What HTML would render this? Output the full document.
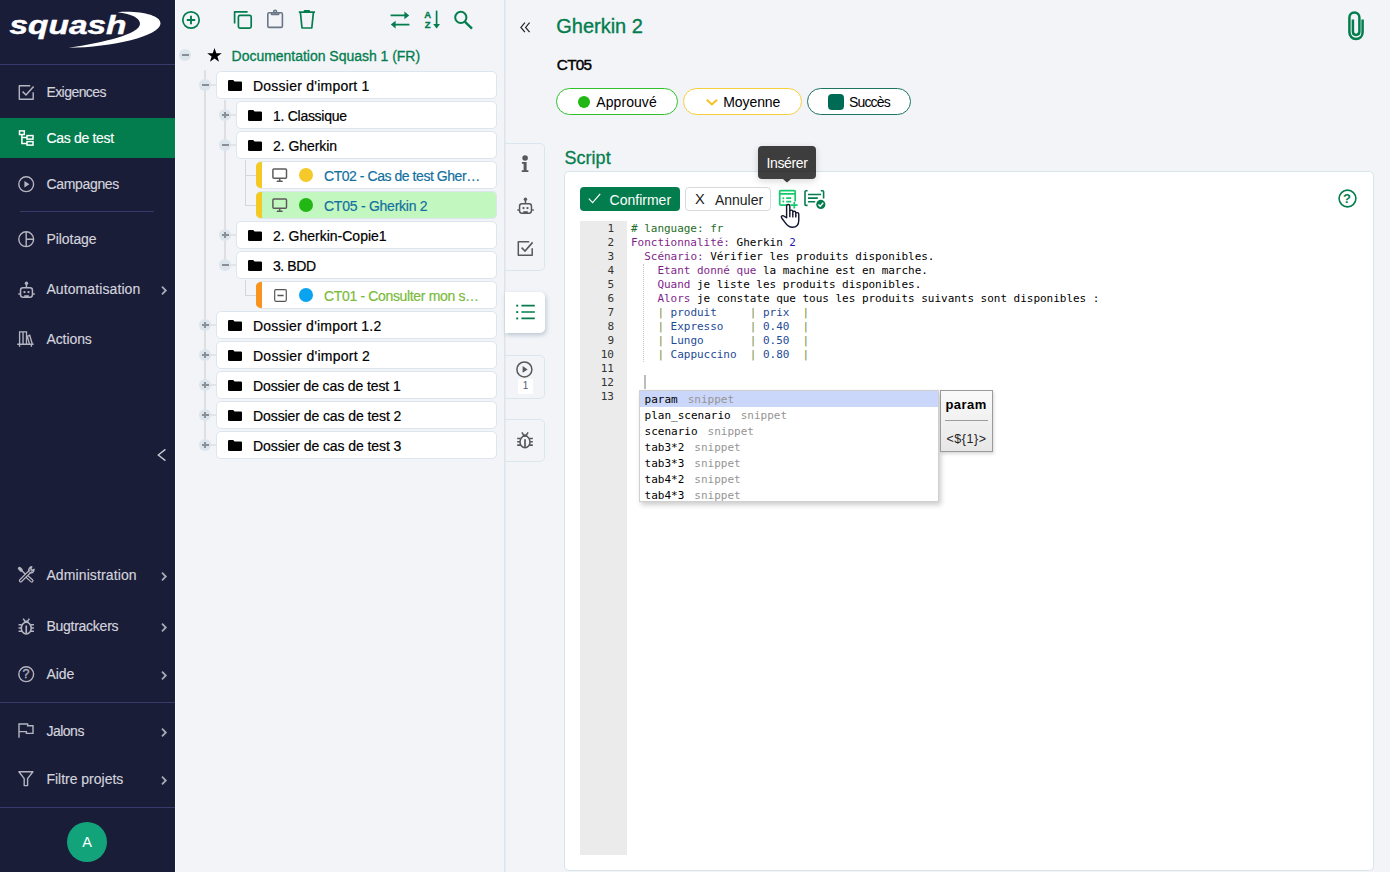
<!DOCTYPE html>
<html lang="fr">
<head>
<meta charset="utf-8">
<title>Squash - Gherkin 2</title>
<style>
*{box-sizing:border-box;margin:0;padding:0}
html,body{width:1390px;height:872px;overflow:hidden}
body{position:relative;background:#f2f4f8;font-family:"Liberation Sans",sans-serif;font-size:14px;color:#000}
.abs{position:absolute}
svg{display:block;overflow:visible}
/* ---------- sidebar ---------- */
#side{position:absolute;left:0;top:0;width:175px;height:872px;background:#1a1d38;color:#d9dae3}
#side .hr{position:absolute;height:1px;background:#373a6b}
#side .sl{position:absolute;left:46px;font-size:14px;line-height:20px;white-space:nowrap;-webkit-text-stroke:0.15px currentColor}
/* ---------- tree ---------- */
#tree{position:absolute;left:175px;top:0;width:329px;height:872px;background:#f2f4f8}
.node{position:absolute;height:28px;background:#fff;border:1px solid #dbe6ee;border-radius:5px;line-height:26px;font-size:14px;white-space:nowrap;overflow:hidden}
.node .lbl{position:absolute;top:1px;-webkit-text-stroke:0.2px currentColor}
.tg{position:absolute;width:12px;height:12px;border-radius:6px;background:#dce5ec}
.tg:before{content:"";position:absolute;left:2.5px;top:5px;width:7px;height:2px;background:#898e94}
.tg.plus:after{content:"";position:absolute;left:5px;top:3px;width:2px;height:6px;background:#8b9096}
.vl{position:absolute;width:2px;background:#dfdfe1}
.hl{position:absolute;height:2px;background:#e3e4e6}
.vl1{position:absolute;width:1px;background:#d6d6d6}
.hl1{position:absolute;height:1px;background:#d6d6d6}
/* ---------- main ---------- */
#main{position:absolute;left:504px;top:0;width:886px;height:872px}
.pill{position:absolute;top:88px;height:27px;border-radius:14px;background:#fff;border:1px solid #000;font-size:14.5px;line-height:25px;white-space:nowrap}
.mono{font-family:"DejaVu Sans Mono","Liberation Mono",monospace}
</style>
</head>
<body>
<div id="side">
<svg class="abs" style="left:0;top:0" width="175" height="64" viewBox="0 0 175 64">
<path d="M117.5 12.2 C140 10.5 160.5 15 160.5 23.5 C160.5 36 112 47.4 68.5 47.8 C104 42.6 139.5 34 140 24 C140.3 18 132 14 117.5 12.2Z" fill="#fff"/>
<text x="9.5" y="33.6" font-family="'Liberation Sans',sans-serif" font-weight="700" font-style="italic" font-size="25.5" fill="#fff" stroke="#fff" stroke-width="0.45" textLength="117" lengthAdjust="spacingAndGlyphs">squash</text>
</svg>
<div class="hr" style="left:0;top:64px;width:175px"></div>
<div class="hr" style="left:20px;top:211px;width:134px"></div>
<div class="hr" style="left:0;top:702px;width:175px"></div>
<div class="hr" style="left:0;top:807px;width:175px"></div>
<div class="abs" style="left:0;top:118px;width:175px;height:40px;background:#037d4d"></div>
<svg class="abs" style="left:18.0px;top:83.6px" width="17" height="17" viewBox="0 0 17 17"><path d="M15.2 8.3V15.2H1.3V1.8H12.2" fill="none" stroke="#b4b5c0" stroke-width="1.4" stroke-linejoin="round"/><path d="M4.6 7.6L8 11L15.6 2.4" fill="none" stroke="#b4b5c0" stroke-width="1.5"/></svg>
<div class="abs sl" style="top:82px;left:46.4px;color:#d3d4dd;letter-spacing:-0.555px">Exigences</div>
<svg class="abs" style="left:18.0px;top:130px" width="17" height="17" viewBox="0 0 17 17"><g fill="none" stroke="#ffffff" stroke-width="1.5"><rect x="1.5" y="0.9" width="4.8" height="3.6"/><rect x="9" y="5.6" width="6" height="3.5"/><rect x="9" y="11.6" width="6" height="3.5"/><path d="M3.9 4.5V13.4H9M3.9 7.4H9"/></g></svg>
<div class="abs sl" style="top:128px;left:46.4px;color:#ffffff;letter-spacing:-0.303px">Cas de test</div>
<svg class="abs" style="left:17.8px;top:175.8px" width="17" height="17" viewBox="0 0 17 17"><circle cx="8.2" cy="8.2" r="7.4" fill="none" stroke="#b4b5c0" stroke-width="1.4"/><path d="M6.4 4.9L11.4 8.2L6.4 11.5Z" fill="#b4b5c0"/></svg>
<div class="abs sl" style="top:174px;left:46.4px;color:#d3d4dd;letter-spacing:-0.322px">Campagnes</div>
<svg class="abs" style="left:17.8px;top:230.8px" width="17" height="17" viewBox="0 0 17 17"><circle cx="8.2" cy="8.2" r="7.4" fill="none" stroke="#b4b5c0" stroke-width="1.4"/><path d="M8.2 0.8V15.6M8.2 8.2H15.6" fill="none" stroke="#b4b5c0" stroke-width="1.4"/></svg>
<div class="abs sl" style="top:229px;left:46.4px;color:#d3d4dd;letter-spacing:-0.049px">Pilotage</div>
<svg class="abs" style="left:17.5px;top:280.5px" width="17" height="17" viewBox="0 0 17 17"><g fill="none" stroke="#b4b5c0" stroke-width="1.5"><rect x="2.55" y="6.85" width="11.9" height="9.3" rx="2.4"/><path d="M8.45 2.4V6.8M0.3 13.1H1.9M15.1 13.1H16.8"/></g><circle cx="8.45" cy="2.2" r="1.7" fill="#b4b5c0"/><circle cx="6.5" cy="11.1" r="1.15" fill="#b4b5c0"/><circle cx="10.5" cy="11.1" r="1.15" fill="#b4b5c0"/><rect x="6.3" y="14.2" width="4.5" height="1.9" fill="#b4b5c0"/></svg>
<div class="abs sl" style="top:279px;left:46.4px;color:#d3d4dd;letter-spacing:0.099px">Automatisation</div>
<svg class="abs" style="left:161px;top:285.5px" width="6" height="9" viewBox="0 0 6 9"><path d="M1 0.7 L4.8 4.5 L1 8.3" fill="none" stroke="#a9aab8" stroke-width="1.8"/></svg>
<svg class="abs" style="left:17.2px;top:331px" width="17" height="17" viewBox="0 0 17 17"><g fill="none" stroke="#b4b5c0" stroke-width="1.35"><path d="M2.6 13.1V0.9H9.5V13.1M6.05 0.9V13.1M10.3 5.4L12.7 4.2L15.2 12.8M10.4 5.6L12.4 12.6M0.2 13.2H16.6M2.6 13.1V15.7M14.4 13.1V15.7"/></g></svg>
<div class="abs sl" style="top:329px;left:46.4px;color:#d3d4dd;letter-spacing:-0.075px">Actions</div>
<svg class="abs" style="left:17.5px;top:566.5px" width="17" height="17" viewBox="0 0 17 17"><g transform="translate(-18.2,-567.6)" stroke-linecap="round" fill="none"><path d="M20 569.3L25.6 574.9" stroke="#b4b5c0" stroke-width="1.5"/><path d="M19.7 569L21.3 570.6" stroke="#b4b5c0" stroke-width="3.3"/><path d="M27 577L31.9 581.3" stroke="#b4b5c0" stroke-width="3.7"/><path d="M26 576.1L31.9 581.3" stroke="#1a1d38" stroke-width="1.3"/><path d="M20.9 581.2L30 572.2" stroke="#b4b5c0" stroke-width="3.7"/><path d="M20.9 581.2L30.6 571.6" stroke="#1a1d38" stroke-width="1.3"/><path d="M29 572.1C28.5 569.6 29.8 567.6 32 567.3L31 569.6L32.4 571L34.3 569.9C34.2 572.3 32.5 573.9 30.2 573.3" stroke="#b4b5c0" stroke-width="1.4" stroke-linejoin="round"/></g></svg>
<div class="abs sl" style="top:565px;left:46.4px;color:#d3d4dd;letter-spacing:0.114px">Administration</div>
<svg class="abs" style="left:161px;top:571.5px" width="6" height="9" viewBox="0 0 6 9"><path d="M1 0.7 L4.8 4.5 L1 8.3" fill="none" stroke="#a9aab8" stroke-width="1.8"/></svg>
<svg class="abs" style="left:17.8px;top:618px" width="17" height="17" viewBox="0 0 17 17"><g transform="translate(-0.6,-0.6) scale(0.985)"><g fill="none" stroke="#b4b5c0" stroke-width="1.55"><ellipse cx="9" cy="10.9" rx="5" ry="5.9"/><path d="M7.5 3.8L5.9 1.3M10.5 3.8L12.1 1.3M1.2 7.4H4.5M1.2 10.7H4M1.2 14.1H4.7M13.5 7.4H16.8M14 10.7H16.8M13.3 14.1H16.8"/></g><path d="M6.2 6.1L7.2 3.2H10.8L11.8 6.1Q9 4.6 6.2 6.1Z" fill="#b4b5c0"/><rect x="8.15" y="8.2" width="1.7" height="8.2" fill="#b4b5c0"/></g></svg>
<div class="abs sl" style="top:616px;left:46.4px;color:#d3d4dd;letter-spacing:-0.255px">Bugtrackers</div>
<svg class="abs" style="left:161px;top:622.5px" width="6" height="9" viewBox="0 0 6 9"><path d="M1 0.7 L4.8 4.5 L1 8.3" fill="none" stroke="#a9aab8" stroke-width="1.8"/></svg>
<svg class="abs" style="left:17.8px;top:665.8px" width="17" height="17" viewBox="0 0 17 17"><circle cx="8.2" cy="8.2" r="7.4" fill="none" stroke="#b4b5c0" stroke-width="1.4"/></svg>
<div class="abs" style="left:17.8px;top:666.0px;width:16.4px;height:16.4px;line-height:16.4px;text-align:center;font-size:12.5px;font-weight:400;-webkit-text-stroke:0.3px #b4b5c0;color:#b4b5c0">?</div>
<div class="abs sl" style="top:664px;left:46.4px;color:#d3d4dd;letter-spacing:-0.033px">Aide</div>
<svg class="abs" style="left:161px;top:670.5px" width="6" height="9" viewBox="0 0 6 9"><path d="M1 0.7 L4.8 4.5 L1 8.3" fill="none" stroke="#a9aab8" stroke-width="1.8"/></svg>
<svg class="abs" style="left:18px;top:723.4px" width="17" height="17" viewBox="0 0 17 17"><path d="M1 14.8V1H9.6V2.8H15V10.4H8.4V8.6H1" fill="none" stroke="#b4b5c0" stroke-width="1.4"/></svg>
<div class="abs sl" style="top:721px;left:46.4px;color:#d3d4dd;letter-spacing:-0.495px">Jalons</div>
<svg class="abs" style="left:161px;top:727.5px" width="6" height="9" viewBox="0 0 6 9"><path d="M1 0.7 L4.8 4.5 L1 8.3" fill="none" stroke="#a9aab8" stroke-width="1.8"/></svg>
<svg class="abs" style="left:18.4px;top:771.4px" width="17" height="17" viewBox="0 0 17 17"><path d="M0.9 0.8H14.9L9.6 7.6V14.6H6.2V7.6Z" fill="none" stroke="#b4b5c0" stroke-width="1.4" stroke-linejoin="round"/></svg>
<div class="abs sl" style="top:769px;left:46.4px;color:#d3d4dd;letter-spacing:-0.009px">Filtre projets</div>
<svg class="abs" style="left:161px;top:775.5px" width="6" height="9" viewBox="0 0 6 9"><path d="M1 0.7 L4.8 4.5 L1 8.3" fill="none" stroke="#a9aab8" stroke-width="1.8"/></svg>
<svg class="abs" style="left:157px;top:448px" width="9" height="15" viewBox="0 0 9 15"><path d="M8.4 1.4L1.3 7L8.4 12.6" fill="none" stroke="#c6c7d1" stroke-width="1.4"/></svg>
<div class="abs" style="left:67px;top:822px;width:40px;height:40px;border-radius:20px;background:#12a37a;color:#fff;text-align:center;line-height:40px;font-size:14.5px">A</div>
</div>
<div id="tree">
<div class="abs" style="left:0;top:0;width:1px;height:872px;background:#fbfcfd"></div>
<svg class="abs" style="left:6px;top:10px" width="20" height="20" viewBox="0 0 20 20"><circle cx="10" cy="10" r="8.2" fill="none" stroke="#047d4e" stroke-width="1.7"/><path d="M10 5.8V14.2M5.8 10H14.2" stroke="#047d4e" stroke-width="1.9" fill="none"/></svg>
<svg class="abs" style="left:58px;top:10px" width="20" height="20" viewBox="0 0 20 20"><g fill="none" stroke="#047d4e" stroke-width="1.7" stroke-linejoin="round"><path d="M1.6 13.6V1.8H14.6"/><rect x="5.4" y="5.4" width="12.8" height="12.8" rx="1.6"/></g></svg>
<svg class="abs" style="left:91px;top:9px" width="18" height="20" viewBox="0 0 18 20"><g fill="none" stroke="#6a7685" stroke-width="1.6" stroke-linejoin="round"><rect x="1.8" y="3.8" width="14.6" height="14.6" rx="1.4"/><path d="M5.6 3.8V5.4H12.6V3.8"/><circle cx="9.1" cy="2.6" r="1.4"/></g></svg>
<svg class="abs" style="left:123px;top:9px" width="18" height="21" viewBox="0 0 18 21"><g fill="none" stroke="#047d4e" stroke-width="1.7" stroke-linejoin="round"><path d="M0.8 3.2H17M2.4 3.4L4 19H13.8L15.4 3.4M6.6 3V1.8H11.2V3"/></g></svg>
<svg class="abs" style="left:215px;top:11px" width="20" height="18" viewBox="0 0 20 18"><g fill="none" stroke="#047d4e" stroke-width="1.7"><path d="M0.6 4.4H16M19.4 13.6H4"/></g><path d="M14.4 0.6L19.2 4.4L14.4 8.2ZM5.6 9.8L0.8 13.6L5.6 17.4Z" fill="#047d4e"/></svg>
<svg class="abs" style="left:249px;top:9px" width="17" height="21" viewBox="0 0 17 21"><text x="0.3" y="9.3" font-family="'Liberation Sans',sans-serif" font-weight="700" font-size="9.5" fill="#047d4e" stroke="#047d4e" stroke-width="0.3">A</text><text x="0.7" y="19.2" font-family="'Liberation Sans',sans-serif" font-weight="700" font-size="9.5" fill="#047d4e" stroke="#047d4e" stroke-width="0.3">Z</text><path d="M12.6 1.6V17" fill="none" stroke="#047d4e" stroke-width="1.7"/><path d="M9.2 15L12.6 19.6L16 15Z" fill="#047d4e"/></svg>
<svg class="abs" style="left:278px;top:10px" width="21" height="20" viewBox="0 0 21 20"><circle cx="7.8" cy="7.4" r="5.6" fill="none" stroke="#047d4e" stroke-width="2"/><path d="M11.8 11.6L19 18.6" stroke="#047d4e" stroke-width="2.4" fill="none"/></svg>
<div class="vl" style="left:29px;top:70px;height:376px"></div>
<div class="vl" style="left:49px;top:100px;height:166px"></div>
<div class="vl1" style="left:70px;top:160px;height:46px"></div>
<div class="hl1" style="left:70px;top:175px;width:11px"></div>
<div class="hl1" style="left:70px;top:205px;width:11px"></div>
<div class="vl1" style="left:70px;top:280px;height:16px"></div>
<div class="hl1" style="left:70px;top:295px;width:11px"></div>
<div class="tg" style="left:4px;top:49px"></div>
<svg class="abs" style="left:31.5px;top:47.5px" width="15" height="14" viewBox="0 0 15 14"><path d="M7.5 0L9.3 5.2H14.8L10.4 8.5L12 13.8L7.5 10.6L3 13.8L4.6 8.5L0.2 5.2H5.7Z" fill="#000"/></svg>
<div class="abs" style="left:56.599999999999994px;top:46px;line-height:20px;font-size:14px;color:#047d4e;white-space:nowrap;-webkit-text-stroke:0.3px #047d4e;letter-spacing:-0.022px">Documentation Squash 1 (FR)</div>
<div class="hl" style="left:36px;top:84px;width:5px"></div>
<div class="tg" style="left:24px;top:79px"></div>
<div class="node" style="left:41px;top:71px;width:281px"><svg class="abs" style="left:11px;top:8px" width="14" height="11" viewBox="0 0 14 11"><path d="M1.2 0H5.2L6.6 1.4H12.8Q14 1.4 14 2.6V9.8Q14 11 12.8 11H1.2Q0 11 0 9.8V1.2Q0 0 1.2 0Z" fill="#000"/></svg><span class="lbl" style="left:36px;letter-spacing:0.234px">Dossier d'import 1</span></div>
<div class="hl" style="left:56px;top:114px;width:5px"></div>
<div class="tg plus" style="left:44px;top:109px"></div>
<div class="node" style="left:61px;top:101px;width:261px"><svg class="abs" style="left:11px;top:8px" width="14" height="11" viewBox="0 0 14 11"><path d="M1.2 0H5.2L6.6 1.4H12.8Q14 1.4 14 2.6V9.8Q14 11 12.8 11H1.2Q0 11 0 9.8V1.2Q0 0 1.2 0Z" fill="#000"/></svg><span class="lbl" style="left:36px;letter-spacing:-0.279px">1. Classique</span></div>
<div class="hl" style="left:56px;top:144px;width:5px"></div>
<div class="tg" style="left:44px;top:139px"></div>
<div class="node" style="left:61px;top:131px;width:261px"><svg class="abs" style="left:11px;top:8px" width="14" height="11" viewBox="0 0 14 11"><path d="M1.2 0H5.2L6.6 1.4H12.8Q14 1.4 14 2.6V9.8Q14 11 12.8 11H1.2Q0 11 0 9.8V1.2Q0 0 1.2 0Z" fill="#000"/></svg><span class="lbl" style="left:36px;letter-spacing:-0.049px">2. Gherkin</span></div>
<div class="node" style="left:81px;top:161px;width:241px;background:#fff;border-left:none"><div class="abs" style="left:0;top:-1px;width:6px;height:28px;background:#f5c924"></div><svg class="abs" style="left:16px;top:6px" width="16" height="15" viewBox="0 0 16 15"><g fill="none" stroke="#5c5c5c" stroke-width="1.5"><rect x="0.9" y="0.9" width="13.6" height="9.4" rx="1"/><path d="M7.7 10.4V13.2"/></g><path d="M4.4 14H11L10.2 12.5H5.2Z" fill="#5c5c5c"/></svg><div class="abs" style="left:43px;top:6px;width:14px;height:14px;border-radius:7px;background:#f5c92a"></div><span class="lbl" style="left:68px;color:#12709f;letter-spacing:-0.451px">CT02 - Cas de test Gher…</span></div>
<div class="node" style="left:81px;top:191px;width:241px;background:#c3f7c0;border-left:none"><div class="abs" style="left:0;top:-1px;width:6px;height:28px;background:#f5c924"></div><svg class="abs" style="left:16px;top:6px" width="16" height="15" viewBox="0 0 16 15"><g fill="none" stroke="#5c5c5c" stroke-width="1.5"><rect x="0.9" y="0.9" width="13.6" height="9.4" rx="1"/><path d="M7.7 10.4V13.2"/></g><path d="M4.4 14H11L10.2 12.5H5.2Z" fill="#5c5c5c"/></svg><div class="abs" style="left:43px;top:6px;width:14px;height:14px;border-radius:7px;background:#22b714"></div><span class="lbl" style="left:68px;color:#12709f;letter-spacing:-0.248px">CT05 - Gherkin 2</span></div>
<div class="hl" style="left:56px;top:234px;width:5px"></div>
<div class="tg plus" style="left:44px;top:229px"></div>
<div class="node" style="left:61px;top:221px;width:261px"><svg class="abs" style="left:11px;top:8px" width="14" height="11" viewBox="0 0 14 11"><path d="M1.2 0H5.2L6.6 1.4H12.8Q14 1.4 14 2.6V9.8Q14 11 12.8 11H1.2Q0 11 0 9.8V1.2Q0 0 1.2 0Z" fill="#000"/></svg><span class="lbl" style="left:36px;letter-spacing:-0.001px">2. Gherkin-Copie1</span></div>
<div class="hl" style="left:56px;top:264px;width:5px"></div>
<div class="tg" style="left:44px;top:259px"></div>
<div class="node" style="left:61px;top:251px;width:261px"><svg class="abs" style="left:11px;top:8px" width="14" height="11" viewBox="0 0 14 11"><path d="M1.2 0H5.2L6.6 1.4H12.8Q14 1.4 14 2.6V9.8Q14 11 12.8 11H1.2Q0 11 0 9.8V1.2Q0 0 1.2 0Z" fill="#000"/></svg><span class="lbl" style="left:36px;letter-spacing:-0.421px">3. BDD</span></div>
<div class="node" style="left:81px;top:281px;width:241px;background:#fff;border-left:none"><div class="abs" style="left:0;top:-1px;width:6px;height:28px;background:#f7941d"></div><svg class="abs" style="left:18px;top:7px" width="13" height="13" viewBox="0 0 13 13"><rect x="0.7" y="0.7" width="11.6" height="11.6" rx="1.2" fill="none" stroke="#555" stroke-width="1.2"/><path d="M3.4 6.5H9.6" stroke="#555" stroke-width="1.3"/></svg><div class="abs" style="left:43px;top:6px;width:14px;height:14px;border-radius:7px;background:#0aa3f0"></div><span class="lbl" style="left:68px;color:#79bb3a;letter-spacing:-0.344px">CT01 - Consulter mon s…</span></div>
<div class="hl" style="left:36px;top:324px;width:5px"></div>
<div class="tg plus" style="left:24px;top:319px"></div>
<div class="node" style="left:41px;top:311px;width:281px"><svg class="abs" style="left:11px;top:8px" width="14" height="11" viewBox="0 0 14 11"><path d="M1.2 0H5.2L6.6 1.4H12.8Q14 1.4 14 2.6V9.8Q14 11 12.8 11H1.2Q0 11 0 9.8V1.2Q0 0 1.2 0Z" fill="#000"/></svg><span class="lbl" style="left:36px;letter-spacing:0.222px">Dossier d'import 1.2</span></div>
<div class="hl" style="left:36px;top:354px;width:5px"></div>
<div class="tg plus" style="left:24px;top:349px"></div>
<div class="node" style="left:41px;top:341px;width:281px"><svg class="abs" style="left:11px;top:8px" width="14" height="11" viewBox="0 0 14 11"><path d="M1.2 0H5.2L6.6 1.4H12.8Q14 1.4 14 2.6V9.8Q14 11 12.8 11H1.2Q0 11 0 9.8V1.2Q0 0 1.2 0Z" fill="#000"/></svg><span class="lbl" style="left:36px;letter-spacing:0.262px">Dossier d'import 2</span></div>
<div class="hl" style="left:36px;top:384px;width:5px"></div>
<div class="tg plus" style="left:24px;top:379px"></div>
<div class="node" style="left:41px;top:371px;width:281px"><svg class="abs" style="left:11px;top:8px" width="14" height="11" viewBox="0 0 14 11"><path d="M1.2 0H5.2L6.6 1.4H12.8Q14 1.4 14 2.6V9.8Q14 11 12.8 11H1.2Q0 11 0 9.8V1.2Q0 0 1.2 0Z" fill="#000"/></svg><span class="lbl" style="left:36px;letter-spacing:-0.108px">Dossier de cas de test 1</span></div>
<div class="hl" style="left:36px;top:414px;width:5px"></div>
<div class="tg plus" style="left:24px;top:409px"></div>
<div class="node" style="left:41px;top:401px;width:281px"><svg class="abs" style="left:11px;top:8px" width="14" height="11" viewBox="0 0 14 11"><path d="M1.2 0H5.2L6.6 1.4H12.8Q14 1.4 14 2.6V9.8Q14 11 12.8 11H1.2Q0 11 0 9.8V1.2Q0 0 1.2 0Z" fill="#000"/></svg><span class="lbl" style="left:36px;letter-spacing:-0.079px">Dossier de cas de test 2</span></div>
<div class="hl" style="left:36px;top:444px;width:5px"></div>
<div class="tg plus" style="left:24px;top:439px"></div>
<div class="node" style="left:41px;top:431px;width:281px"><svg class="abs" style="left:11px;top:8px" width="14" height="11" viewBox="0 0 14 11"><path d="M1.2 0H5.2L6.6 1.4H12.8Q14 1.4 14 2.6V9.8Q14 11 12.8 11H1.2Q0 11 0 9.8V1.2Q0 0 1.2 0Z" fill="#000"/></svg><span class="lbl" style="left:36px;letter-spacing:-0.079px">Dossier de cas de test 3</span></div>
</div>
<div id="main">
<div class="abs" style="left:0;top:0;width:1px;height:872px;background:#dbe3ec"></div><div class="abs" style="left:1px;top:0;width:1px;height:872px;background:#e8edf3"></div>
<svg class="abs" style="left:16px;top:21.5px" width="11" height="11" viewBox="0 0 11 11"><path d="M4.9 0.6L0.9 5.4L4.9 10.2M9.6 0.6L5.6 5.4L9.6 10.2" fill="none" stroke="#222" stroke-width="1.2"/></svg>
<div class="abs" style="left:52.299999999999955px;top:11.87px;font-size:20px;line-height:28px;font-weight:400;color:#047d4e;letter-spacing:-0.024px;white-space:pre;-webkit-text-stroke:0.35px #047d4e;">Gherkin 2</div>
<div class="abs" style="left:52.799999999999955px;top:54.20px;font-size:15.3px;line-height:21px;font-weight:400;color:#000;letter-spacing:-0.702px;white-space:pre;-webkit-text-stroke:0.45px #000;">CT05</div>
<svg class="abs" style="left:842.5999999999999px;top:10.5px" width="18" height="30" viewBox="0 0 18 30"><path d="M15.6 8.4V21.2C15.6 25.2 12.8 27.9 9 27.9S2.4 25.2 2.4 21.2V6.8C2.4 3.6 4.6 1.6 7.4 1.6S12.4 3.6 12.4 6.8V20.6C12.4 22.6 11 24 9 24S5.9 22.6 5.9 20.6V8.4" fill="none" stroke="#047d4e" stroke-width="2.5"/></svg>
<div class="pill" style="left:52px;width:122px;border-color:#2fc22b"><div class="abs" style="left:21px;top:6.5px;width:12px;height:12px;border-radius:6px;background:#22b714"></div></div>
<div class="abs" style="left:92.29999999999995px;top:92.15px;font-size:14px;line-height:20px;font-weight:400;color:#000;letter-spacing:0.070px;white-space:pre;">Approuvé</div>
<div class="pill" style="left:179px;width:119px;border-color:#f6cf3a"><svg class="abs" style="left:21.5px;top:10px" width="12" height="7" viewBox="0 0 12 7"><path d="M0.8 0.8L5.9 5.4L11 0.8" fill="none" stroke="#f5c11f" stroke-width="2"/></svg></div>
<div class="abs" style="left:219.20000000000005px;top:92.15px;font-size:14px;line-height:20px;font-weight:400;color:#000;letter-spacing:-0.071px;white-space:pre;">Moyenne</div>
<div class="pill" style="left:303px;width:104px;border-color:#1d7561"><div class="abs" style="left:20px;top:5px;width:16px;height:16px;border-radius:4px;background:#006b54"></div></div>
<div class="abs" style="left:345px;top:92.15px;font-size:14px;line-height:20px;font-weight:400;color:#000;letter-spacing:-0.854px;white-space:pre;">Succès</div>
<div style="position:absolute;left:1px;width:40px;border:1px solid #d9e6ee;border-left:none;border-radius:0 5px 5px 0;top:143px;height:128px"></div>
<div style="position:absolute;left:1px;width:40px;border:1px solid #d9e6ee;border-left:none;border-radius:0 5px 5px 0;top:292px;height:41px;background:#fff;border-color:#fff;box-shadow:1px 2px 4px rgba(120,140,160,.45)"></div>
<div style="position:absolute;left:1px;width:40px;border:1px solid #d9e6ee;border-left:none;border-radius:0 5px 5px 0;top:355px;height:44px"></div>
<div style="position:absolute;left:1px;width:40px;border:1px solid #d9e6ee;border-left:none;border-radius:0 5px 5px 0;top:419px;height:43px"></div>
<svg class="abs" style="left:17px;top:155px" width="8" height="18" viewBox="0 0 8 18"><circle cx="4.1" cy="3" r="2.8" fill="#585858"/><path d="M0.9 7H5.6V15.2H7.4V17H0.7V15.2H2.6V8.8H0.9Z" fill="#585858"/></svg>
<svg class="abs" style="left:12.5px;top:197px" width="18" height="18" viewBox="0 0 18 18"><g fill="none" stroke="#585858" stroke-width="1.5"><rect x="2.55" y="6.85" width="11.9" height="9.3" rx="2.4"/><path d="M8.45 2.4V6.8M0.3 13.1H1.9M15.1 13.1H16.8"/></g><circle cx="8.45" cy="2.2" r="1.7" fill="#585858"/><circle cx="6.5" cy="11.1" r="1.15" fill="#585858"/><circle cx="10.5" cy="11.1" r="1.15" fill="#585858"/><rect x="6.3" y="14.2" width="4.5" height="1.9" fill="#585858"/></svg>
<svg class="abs" style="left:13px;top:239.6px" width="17" height="17" viewBox="0 0 17 17"><path d="M15.2 8.3V15.2H1.3V1.8H12.2" fill="none" stroke="#585858" stroke-width="1.5" stroke-linejoin="round"/><path d="M4.6 7.6L8 11L15.6 2.4" fill="none" stroke="#585858" stroke-width="1.6"/></svg>
<svg class="abs" style="left:11.600000000000023px;top:304.4px" width="19" height="16" viewBox="0 0 19 16"><g stroke="#047d4e" stroke-width="1.6" fill="none"><path d="M5.4 1.6H18.8M5.4 8H18.8M5.4 14.4H18.8"/></g><g fill="#047d4e"><rect x="0.2" y="0.7" width="2" height="1.9"/><rect x="0.2" y="7.1" width="2" height="1.9"/><rect x="0.2" y="13.5" width="2" height="1.9"/></g></svg>
<svg class="abs" style="left:12.200000000000045px;top:360.6px" width="17" height="17" viewBox="0 0 17 17"><circle cx="8.4" cy="8.4" r="7.5" fill="none" stroke="#585858" stroke-width="1.5"/><path d="M6.6 5L11.6 8.4L6.6 11.8Z" fill="#585858"/></svg>
<div class="abs" style="left:14px;top:379px;width:15px;height:15px;background:#fff;text-align:center;font-size:10px;line-height:14px;color:#55576e">1</div>
<svg class="abs" style="left:12px;top:431px" width="18" height="18" viewBox="0 0 18 18"><g fill="none" stroke="#585858" stroke-width="1.55"><ellipse cx="9" cy="10.9" rx="5" ry="5.9"/><path d="M7.5 3.8L5.9 1.3M10.5 3.8L12.1 1.3M1.2 7.4H4.5M1.2 10.7H4M1.2 14.1H4.7M13.5 7.4H16.8M14 10.7H16.8M13.3 14.1H16.8"/></g><path d="M6.2 6.1L7.2 3.2H10.8L11.8 6.1Q9 4.6 6.2 6.1Z" fill="#585858"/><rect x="8.15" y="8.2" width="1.7" height="8.2" fill="#585858"/></svg>
<div class="abs" style="left:60.39999999999998px;top:146.06px;font-size:18px;line-height:25px;font-weight:400;color:#047d4e;letter-spacing:0.047px;white-space:pre;-webkit-text-stroke:0.3px #047d4e;">Script</div>
<div class="abs" style="left:60px;top:171px;width:810px;height:700px;background:#fff;border:1px solid #d9e4eb;border-radius:5px"></div>
<div class="abs" style="left:76px;top:187px;width:100px;height:24px;background:#047d4e;border-radius:4px"><svg class="abs" style="left:8.3px;top:5.8px" width="13" height="11" viewBox="0 0 13 11"><path d="M0.8 5.6L4.6 9.6L12.2 0.8" fill="none" stroke="#fff" stroke-width="1.2"/></svg></div>
<div class="abs" style="left:105.60000000000002px;top:189.55px;font-size:14px;line-height:20px;font-weight:400;color:#fff;letter-spacing:0.003px;white-space:pre;">Confirmer</div>
<div class="abs" style="left:181px;top:187px;width:86px;height:24px;background:#fff;border:1px solid #d9d9d9;border-radius:4px"></div>
<div class="abs" style="left:191.10000000000002px;top:189.24px;font-size:14.6px;line-height:20px;font-weight:400;color:#222;letter-spacing:-0.034px;white-space:pre;">X</div>
<div class="abs" style="left:211px;top:189.55px;font-size:14px;line-height:20px;font-weight:400;color:#222;letter-spacing:-0.024px;white-space:pre;">Annuler</div>
<svg class="abs" style="left:274px;top:189px" width="21" height="21" viewBox="0 0 21 21"><g fill="none" stroke="#13cb6c" stroke-width="1.7"><path d="M17.2 12.6V2.8Q17.2 1.7 16.1 1.7H2.8Q1.7 1.7 1.7 2.8V15Q1.7 16.1 2.8 16.1H12.6"/><path d="M1.7 4.9H17.2M8.2 9.2H13.2M8.2 12.6H13.2M16.3 12.9V19.6M13 16.2H19.6"/></g><circle cx="5.3" cy="9.2" r="1" fill="#13cb6c"/><circle cx="5.3" cy="12.6" r="1" fill="#13cb6c"/></svg>
<svg class="abs" style="left:299.6px;top:189.2px" width="22" height="21" viewBox="0 0 22 21"><g fill="none" stroke="#047d4e" stroke-width="1.6"><path d="M3.6 1.7H2Q1 1.7 1 2.7V15.4Q1 16.4 2 16.4H3.6M16.8 1.7H18.6Q19.6 1.7 19.6 2.7V9.4"/><path d="M4 5.5H17M4 9.1H13.8M4 12.7H11.2"/></g><circle cx="16.8" cy="15.4" r="4.6" fill="#047d4e"/><path d="M14.4 15.4L16.2 17.2L19.2 13.8" fill="none" stroke="#fff" stroke-width="1.4"/></svg>
<svg class="abs" style="left:833.5px;top:188.5px" width="19" height="19" viewBox="0 0 19 19"><circle cx="9.5" cy="9.5" r="8.4" fill="none" stroke="#047d4e" stroke-width="1.6"/></svg>
<div class="abs" style="left:833.5px;top:188.5px;width:19px;height:19px;text-align:center;line-height:19.5px;font-size:13px;font-weight:700;color:#047d4e">?</div>
<div class="abs" style="left:254px;top:146px;width:58px;height:33px;background:rgba(0,0,0,.75);border-radius:4px;box-shadow:0 2px 7px rgba(0,0,0,.16)"></div>
<svg class="abs" style="left:279px;top:179px" width="8" height="4" viewBox="0 0 8 4"><path d="M0 0H8L4.6 2.9Q4 3.4 3.4 2.9Z" fill="rgba(0,0,0,.75)"/></svg>
<div class="abs" style="left:262.4px;top:153.15px;font-size:14px;line-height:20px;font-weight:400;color:#fff;letter-spacing:-0.340px;white-space:pre;">Insérer</div>
<div class="abs" style="left:76px;top:221px;width:47px;height:634px;background:#ebebeb"></div>
<div class="abs mono" style="left:76px;top:222px;width:34px;text-align:right;font-size:11px;line-height:14px;color:#333"><div>1</div><div>2</div><div>3</div><div>4</div><div>5</div><div>6</div><div>7</div><div>8</div><div>9</div><div>10</div><div>11</div><div>12</div><div>13</div></div>
<div class="abs mono" style="left:127px;top:222px;font-size:11px;line-height:14px;color:#000;white-space:pre;letter-spacing:-0.026px"><div><span style="color:#236e25"># language: fr</span></div><div><span style="color:#811f8a">Fonctionnalité:</span> Gherkin <span style="color:#1a1aa6">2</span></div><div>  <span style="color:#811f8a">Scénario:</span> Vérifier les produits disponibles.</div><div>    <span style="color:#811f8a">Etant donné que</span> la machine est en marche.</div><div>    <span style="color:#811f8a">Quand</span> je liste les produits disponibles.</div><div>    <span style="color:#811f8a">Alors</span> je constate que tous les produits suivants sont disponibles :</div><div>    <span style="color:#7a8b3c">|</span><span style="color:#234a97"> produit     </span><span style="color:#7a8b3c">|</span><span style="color:#234a97"> prix  </span><span style="color:#7a8b3c">|</span></div><div>    <span style="color:#7a8b3c">|</span><span style="color:#234a97"> Expresso    </span><span style="color:#7a8b3c">|</span><span style="color:#234a97"> 0.40  </span><span style="color:#7a8b3c">|</span></div><div>    <span style="color:#7a8b3c">|</span><span style="color:#234a97"> Lungo       </span><span style="color:#7a8b3c">|</span><span style="color:#234a97"> 0.50  </span><span style="color:#7a8b3c">|</span></div><div>    <span style="color:#7a8b3c">|</span><span style="color:#234a97"> Cappuccino  </span><span style="color:#7a8b3c">|</span><span style="color:#234a97"> 0.80  </span><span style="color:#7a8b3c">|</span></div><div> </div><div> </div><div> </div></div>
<div class="abs" style="left:139px;top:264px;width:0;height:98px;border-left:1px dotted #c4c4c4"></div>
<div class="abs" style="left:140px;top:375px;width:2px;height:14px;background:#bdbdbd"></div>
<div class="abs" style="left:135px;top:390px;width:300px;height:112px;background:#fff;border:1px solid #d0d0d0;box-shadow:2px 3px 5px rgba(0,0,0,.2)"></div>
<div class="abs" style="left:136px;top:391px;width:298px;height:16px;background:#cad6fa"></div>
<div class="abs mono" style="left:140.60000000000002px;top:392px;font-size:11px;line-height:16px;color:#000;white-space:pre"><div>param<span style="color:#959595;margin-left:3.4px"> snippet</span></div><div>plan_scenario<span style="color:#959595;margin-left:3.4px"> snippet</span></div><div>scenario<span style="color:#959595;margin-left:3.4px"> snippet</span></div><div>tab3*2<span style="color:#959595;margin-left:3.4px"> snippet</span></div><div>tab3*3<span style="color:#959595;margin-left:3.4px"> snippet</span></div><div>tab4*2<span style="color:#959595;margin-left:3.4px"> snippet</span></div><div>tab4*3<span style="color:#959595;margin-left:3.4px"> snippet</span></div></div>
<div class="abs" style="left:436px;top:390px;width:53px;height:62px;background:linear-gradient(#fafafa,#e7e7e7);border:1px solid #9a9a9a;box-shadow:1px 2px 3px rgba(0,0,0,.15)"></div>
<div class="abs" style="left:441.4px;top:395.90px;font-size:13px;line-height:18px;font-weight:700;color:#000;letter-spacing:0.474px;white-space:pre;">param</div>
<div class="abs" style="left:441px;top:420px;width:43px;height:1px;background:#9c9c9c"></div>
<div class="abs" style="left:442.4px;top:429.67px;font-size:12.5px;line-height:18px;font-weight:400;color:#222;letter-spacing:0.573px;white-space:pre;">&lt;${1}&gt;</div>
<svg class="abs" style="left:276px;top:203px" width="22.4" height="26" viewBox="0 0 21 26" preserveAspectRatio="none"><path d="M6.2 14.8V3.2C6.2 0.9 9.2 0.9 9.2 3.2V10.6V8.4C9.2 6.6 12 6.6 12 8.4V11V9.4C12 7.8 14.8 7.8 14.8 9.4V12V10.8C14.8 9.2 17.6 9.4 17.6 11V17.2C17.6 21.4 15.4 24.2 11.6 24.2C8.4 24.2 6.8 22.6 5 19.8L1.6 15C0.4 13 2.6 11.8 4 13.4Z" fill="#fff" stroke="#15172f" stroke-width="1.35" stroke-linejoin="round"/><path d="M9.2 10.6V14.2M12 11V14.4M14.8 12V14.6" stroke="#15172f" stroke-width="1.3" fill="none"/></svg>
</div>
</body>
</html>
